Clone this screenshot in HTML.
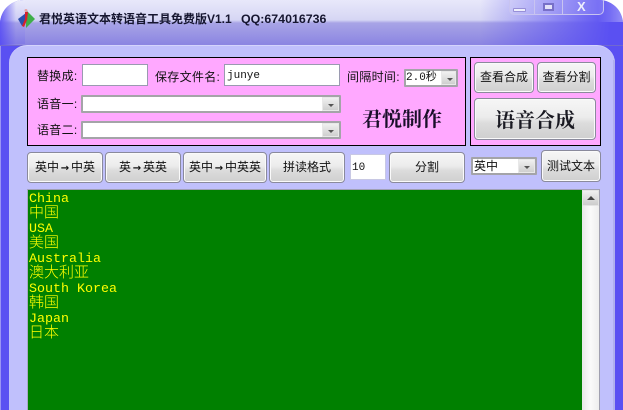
<!DOCTYPE html>
<html><head><meta charset="utf-8">
<style>
html,body{margin:0;padding:0;background:#fff}
#w{position:relative;width:623px;height:410px;overflow:hidden;background:#fff;font-family:"Liberation Sans","Noto Sans CJK SC",sans-serif;font-size:12px;color:#111}
#w div,#w span.a{position:absolute;box-sizing:border-box;white-space:nowrap}
.b{border:1px solid #8a8a9c;border-radius:4px;background:linear-gradient(#f6f6f6 0,#ececec 45%,#dcdcdc 60%,#cfcfcf 100%);text-align:center;box-shadow:inset 0 0 0 1px #fafafa}
.p{background:#ffa8ff;border:1px solid #000}
.i{background:#fff;border:1px solid #9a9ab0;font-family:"Liberation Mono",monospace;font-size:11px;line-height:23px;padding-left:2px}
.c{background:#fff;border:2px solid #a4a4a8;border-radius:1px}
.ar{right:0;top:0;bottom:0;width:17px;background:linear-gradient(#f0f0f0,#cfcfcf);border:1px solid #e8e8e8}
.ar:after{content:"";position:absolute;left:5px;top:6px;border:3px solid transparent;border-top:3px solid #555;border-bottom:0}
.t{font-size:12px;line-height:16px;letter-spacing:.3px}
.l{color:#ffff00;left:29px;line-height:15px;font-family:"Liberation Mono",monospace;font-size:13.33px}
.z{font-family:"Noto Sans CJK SC",sans-serif;font-size:15px;font-weight:300;letter-spacing:0}
.ra{font-family:"DejaVu Sans",sans-serif;font-size:10px;font-weight:bold;display:inline-block;width:12px;text-align:center;vertical-align:baseline}
</style></head><body>
<div id="w">
<!-- window frame -->
<div style="left:0;top:0;width:623px;height:410px;border-radius:24px 24px 0 0;background:#5a50f2"></div>
<div style="left:0;top:45px;width:1px;height:365px;background:#9a94f4"></div>
<div style="left:0;top:0;width:623px;height:46px;border-radius:24px 24px 0 0;background:linear-gradient(90deg,#5a50f2 0,rgba(90,80,242,0) 16px,rgba(90,80,242,0) 480px,#5a50f2 610px),linear-gradient(#e8e8fa 0,#d6d6f4 20px,#a8a4e6 23px,#8c86e2 44px)"></div>
<div style="left:598px;top:0;width:25px;height:22px;background:linear-gradient(90deg,rgba(255,255,255,0),rgba(255,255,255,.35));border-radius:0 24px 0 0"></div>
<div style="left:0;top:0;width:25px;height:44px;background:linear-gradient(180deg,rgba(255,255,255,.1),rgba(90,80,242,.2));border-radius:24px 0 0 0"></div>
<div style="left:0;top:45px;width:623px;height:1px;background:#7068d0"></div>
<!-- inner panel -->
<div style="left:9px;top:45px;width:606px;height:365px;border-radius:18px 18px 0 0;background:#c0c0fc;border-top:1px solid #d4d4fc"></div>
<div style="left:613px;top:60px;width:2px;height:350px;background:#b0b0ee"></div>
<!-- icon -->
<svg style="position:absolute;left:16px;top:8px" width="20" height="22" viewBox="0 0 20 22">
<path d="M10 2 L19 11 L10 20Z" fill="#3fae4a"/>
<path d="M10 5 L2 11 L6 18 L10 13Z" fill="#2c4fae"/>
<path d="M9 4 L12 4 L11 12 L8 19 L6 18 L9 11Z" fill="#d8202c"/>
<circle cx="10" cy="2.5" r="1.5" fill="#e8a0a0"/>
</svg>
<!-- title -->
<div style="left:39px;top:10px;font-size:12px;line-height:18px;font-weight:bold;color:#161630">君悦英语文本转语音工具免费版V1.1</div>
<div style="left:241px;top:10px;font-size:12.4px;line-height:18px;font-weight:bold;color:#161630">QQ:674016736</div>
<!-- window buttons -->
<div style="left:509px;top:-3px;width:95px;height:18px;border:1px solid #c8c4f0;border-radius:0 0 5px 5px;background:rgba(255,255,255,.12)"></div>
<div style="left:534px;top:0;width:1px;height:15px;background:#c8c4f0"></div>
<div style="left:562px;top:0;width:1px;height:15px;background:#c8c4f0"></div>
<div style="left:513px;top:8px;width:13px;height:4px;border-radius:1px;background:#eeeefc;border:1px solid #9890d8"></div>
<div style="left:543px;top:3px;width:11px;height:8px;border:2px solid #7870c8;background:#e4e2f8"></div>
<div style="left:577px;top:-1px;font-size:13px;line-height:16px;font-weight:bold;color:#eeeefc">X</div>
<!-- left pink panel -->
<div class="p" style="left:27px;top:57px;width:439px;height:89px"></div>
<div class="t" style="left:37px;top:68px">替换成:</div>
<div class="i" style="left:82px;top:64px;width:66px;height:22px"></div>
<div class="t" style="left:155px;top:69px">保存文件名:</div>
<div class="i" style="left:224px;top:64px;width:116px;height:22px">junye</div>
<div class="t" style="left:347px;top:69px">间隔时间:</div>
<div class="c" style="left:404px;top:69px;width:54px;height:18px"><span class="a" style="left:0;top:0;font-size:11px;line-height:14px;font-family:'Liberation Mono','Noto Sans CJK SC',monospace">2.0秒</span><div class="ar" style="width:15px"></div></div>
<div class="t" style="left:37px;top:96px">语音一:</div>
<div class="c" style="left:81px;top:95px;width:260px;height:18px"><div class="ar"></div></div>
<div class="t" style="left:37px;top:122px">语音二:</div>
<div class="c" style="left:81px;top:121px;width:260px;height:18px"><div class="ar"></div></div>
<div style="left:362px;top:105px;font-family:'Noto Serif CJK SC',serif;font-weight:bold;font-size:20px;line-height:26px;color:#1a0f2a">君悦制作</div>
<!-- right pink panel -->
<div class="p" style="left:470px;top:57px;width:131px;height:89px"></div>
<div class="b" style="left:474px;top:62px;width:60px;height:31px;line-height:29px">查看合成</div>
<div class="b" style="left:537px;top:62px;width:59px;height:31px;line-height:29px">查看分割</div>
<div class="b" style="left:474px;top:98px;width:122px;height:42px;line-height:40px;font-family:'Noto Serif CJK SC',serif;font-size:20px;font-weight:bold;color:#1a1a22">语音合成</div>
<!-- row -->
<div class="b" style="left:27px;top:152px;width:76px;height:31px;line-height:29px">英中<span class="ra">→</span>中英</div>
<div class="b" style="left:105px;top:152px;width:76px;height:31px;line-height:29px">英<span class="ra">→</span>英英</div>
<div class="b" style="left:183px;top:152px;width:84px;height:31px;line-height:29px">英中<span class="ra">→</span>中英英</div>
<div class="b" style="left:269px;top:152px;width:76px;height:31px;line-height:29px">拼读格式</div>
<div style="left:350px;top:154px;width:36px;height:26px;background:#fff;border:1px solid #c8c8e4;font-family:'Liberation Mono',monospace;font-size:11px;line-height:26px;padding-left:1px">10</div>
<div class="b" style="left:389px;top:152px;width:76px;height:31px;line-height:29px">分割</div>
<div class="c" style="left:471px;top:157px;width:66px;height:18px"><span class="a" style="left:1px;top:-1px;font-size:12px;line-height:16px">英中</span><div class="ar"></div></div>
<div class="b" style="left:541px;top:150px;width:60px;height:32px;line-height:30px">测试文本</div>
<!-- text area -->
<div style="left:27px;top:189px;width:573px;height:221px;background:#008000;border-top:1px solid #a0a0b4;border-left:1px solid #a8a8c4"></div>
<div style="left:582px;top:190px;width:17px;height:220px;background:linear-gradient(90deg,#e8e8e8,#fafafa 50%,#eeeeee)"></div>
<div style="left:599px;top:189px;width:1px;height:221px;background:#a0a0b0"></div>
<div style="left:582px;top:190px;width:17px;height:16px;background:linear-gradient(#f0f0f0,#cccccc);border:1px solid #e4e4e4"></div>
<div style="left:587px;top:196px;width:0;height:0;border:4px solid transparent;border-bottom:4px solid #444;border-top:0"></div>
<div class="l" style="top:192px">China</div>
<div class="l z" style="top:204px">中国</div>
<div class="l" style="top:222px">USA</div>
<div class="l z" style="top:234px">美国</div>
<div class="l" style="top:252px">Australia</div>
<div class="l z" style="top:264px">澳大利亚</div>
<div class="l" style="top:282px">South Korea</div>
<div class="l z" style="top:294px">韩国</div>
<div class="l" style="top:312px">Japan</div>
<div class="l z" style="top:324px">日本</div>
</div>
</body></html>
